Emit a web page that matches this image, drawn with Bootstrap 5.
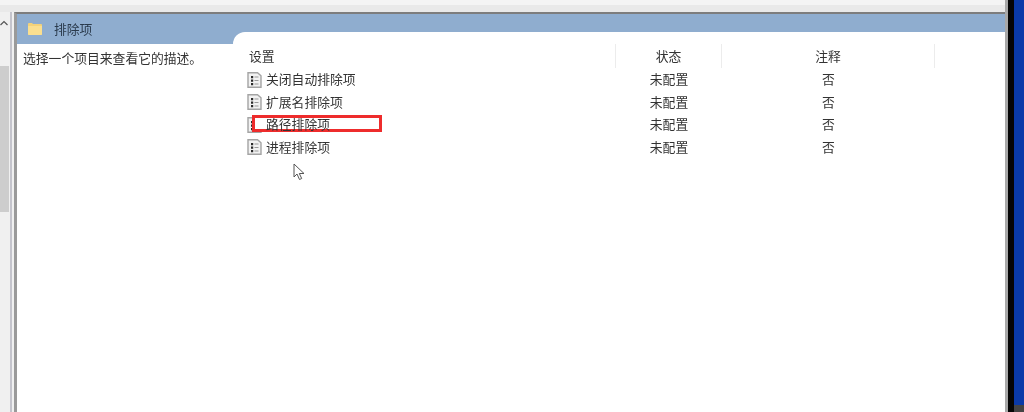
<!DOCTYPE html>
<html lang="zh-CN">
<head>
    <meta charset="UTF-8">
    <title>排除项</title>
    <link href="https://cdn.jsdelivr.net/npm/bootstrap@5.3.0/dist/css/bootstrap.min.css" rel="stylesheet">
    <style>
        html, body { height: 412px; overflow: hidden; }
        body { background: #0a3aa8; font-family: "Noto Sans CJK SC", "Liberation Sans", sans-serif; font-size: 12.8px; color: #333; }
        .screen-wrap { width: 1024px; height: 412px; }
        .desktop-edge { width: 16px; border-left: 6px solid #050505; background: linear-gradient(#0a3aa8 405px, #444 405px); }
        .win { width: 1008px; background: #f0f0f0; border-right: 3px solid #a8a8a8; filter: blur(.45px); }
        .win-top { height: 12px; background: linear-gradient(#f4f4f4 5px, #e9e9e9 5px); }
        .tree-col { width: 14px; }
        .tree-scroll { width: 9px; background: #f0f0f0; }
        .tree-arrow { height: 54px; padding-top: 8px; }
        .tree-thumb { height: 146px; background: #cdcdcd; }
        .tree-gap { width: 5px; background: #f0f0f0; border-left: 2px solid #c4c4cc; margin-left: 1px; }
        .pane { border-left: 3px solid #9a9a9a; border-top: 2px solid #7d7d7d; background: #fff; position: relative; }
        .pane-head { height: 30px; background: #8fadcf; padding-left: 10px; gap: 11px; color: #2a3a4c; }
        .pane-tab { position: absolute; left: 216px; top: 18px; right: 0; height: 12px; background: #fff; border-top-left-radius: 12px; }
        .desc-col { width: 216px; padding: 4px 0 0 6px; }
        .list-col { padding-left: 16px; position: relative; }
        .cols { display: grid; grid-template-columns: 367px 106px 213px 1fr; }
        .cols > div { height: 22.5px; display: flex; align-items: center; }
        .cols > .head-cell { height: 24px; margin-bottom: -.5px; border-right: 1px solid #ececec; }
        .name-cell { gap: 4px; margin-left: -2px; }
        .name-cell svg { margin-top: 2px; }
        .row-label { position: relative; z-index: 1; }
        .red-box { position: absolute; left: 19px; top: 71px; width: 130px; height: 17px; border: 3px solid #ee2c2c; background: #fff; }
        .cursor-mark { position: absolute; left: 60px; top: 119px; }
    </style>
</head>
<body>
<div class="screen-wrap d-flex">
    <div class="win d-flex flex-column">
        <div class="win-top"></div>
        <div class="d-flex flex-grow-1">
            <div class="tree-col d-flex">
                <div class="tree-scroll d-flex flex-column">
                    <div class="tree-arrow">
                        <svg class="d-block" width="9" height="6" viewBox="0 0 9 6"><path d="M.5 5 4 1.500 7.500 5" fill="none" stroke="#555" stroke-width="1.200"/></svg>
                    </div>
                    <div class="tree-thumb"></div>
                </div>
                <div class="tree-gap"></div>
            </div>
            <div class="pane flex-grow-1 d-flex flex-column">
                <div class="pane-head d-flex align-items-center">
                    <svg width="16" height="14" viewBox="0 0 16 14">
                        <path d="M1 2q0-1 1-1h3l1 1h8q1 0 1 1v9q0 1-1 1H2q-1 0-1-1z" fill="#f3d27a"/>
                        <path d="M1 4h14v8q0 1-1 1H2q-1 0-1-1z" fill="#fadf90"/>
                    </svg>
                    <span>排除项</span>
                </div>
                <div class="pane-tab"></div>
                <div class="d-flex flex-grow-1">
                    <div class="desc-col">选择一个项目来查看它的描述。</div>
                    <div class="list-col flex-grow-1">
                        <div class="red-box"></div>
                        <div class="cols">
                            <div class="head-cell">设置</div>
                            <div class="head-cell justify-content-center">状态</div>
                            <div class="head-cell justify-content-center">注释</div>
                            <div></div>

                            <div class="name-cell"><svg width="15" height="16"><use href="#policy"/></svg>关闭自动排除项</div>
                            <div class="justify-content-center">未配置</div>
                            <div class="justify-content-center">否</div>
                            <div></div>

                            <div class="name-cell"><svg width="15" height="16"><use href="#policy"/></svg>扩展名排除项</div>
                            <div class="justify-content-center">未配置</div>
                            <div class="justify-content-center">否</div>
                            <div></div>

                            <div class="name-cell"><svg width="15" height="16"><use href="#policy"/></svg><span class="row-label">路径排除项</span></div>
                            <div class="justify-content-center">未配置</div>
                            <div class="justify-content-center">否</div>
                            <div></div>

                            <div class="name-cell"><svg width="15" height="16"><use href="#policy"/></svg>进程排除项</div>
                            <div class="justify-content-center">未配置</div>
                            <div class="justify-content-center">否</div>
                            <div></div>
                        </div>
                        <svg class="cursor-mark" width="13" height="18" viewBox="0 0 13 18">
                            <path d="M1 1v13l3-3 2.500 5.500 2.200-1L6.300 10.500H11z" fill="#fff" stroke="#555" stroke-width="1"/>
                        </svg>
                    </div>
                </div>
            </div>
        </div>
    </div>
    <div class="desktop-edge"></div>
</div>
<svg width="0" height="0" class="position-absolute">
    <symbol id="policy" viewBox="0 0 15 16">
        <path d="M1 .800h9.500l3.500 3v11.400H1z" fill="#f2f2f2" stroke="#a4a4a4" stroke-width="1.400"/>
        <path d="M4 4h2.200v2.200H4zM4 7.500h2.200v2.200H4zM4 11h2.200v2.200H4z" fill="#2a2a2a"/>
        <path d="M7.500 5h4M7.500 8.500h4M7.500 12h4" stroke="#999"/>
    </symbol>
</svg>
<script src="https://cdn.jsdelivr.net/npm/bootstrap@5.3.0/dist/js/bootstrap.bundle.min.js"></script>
</body>
</html>
